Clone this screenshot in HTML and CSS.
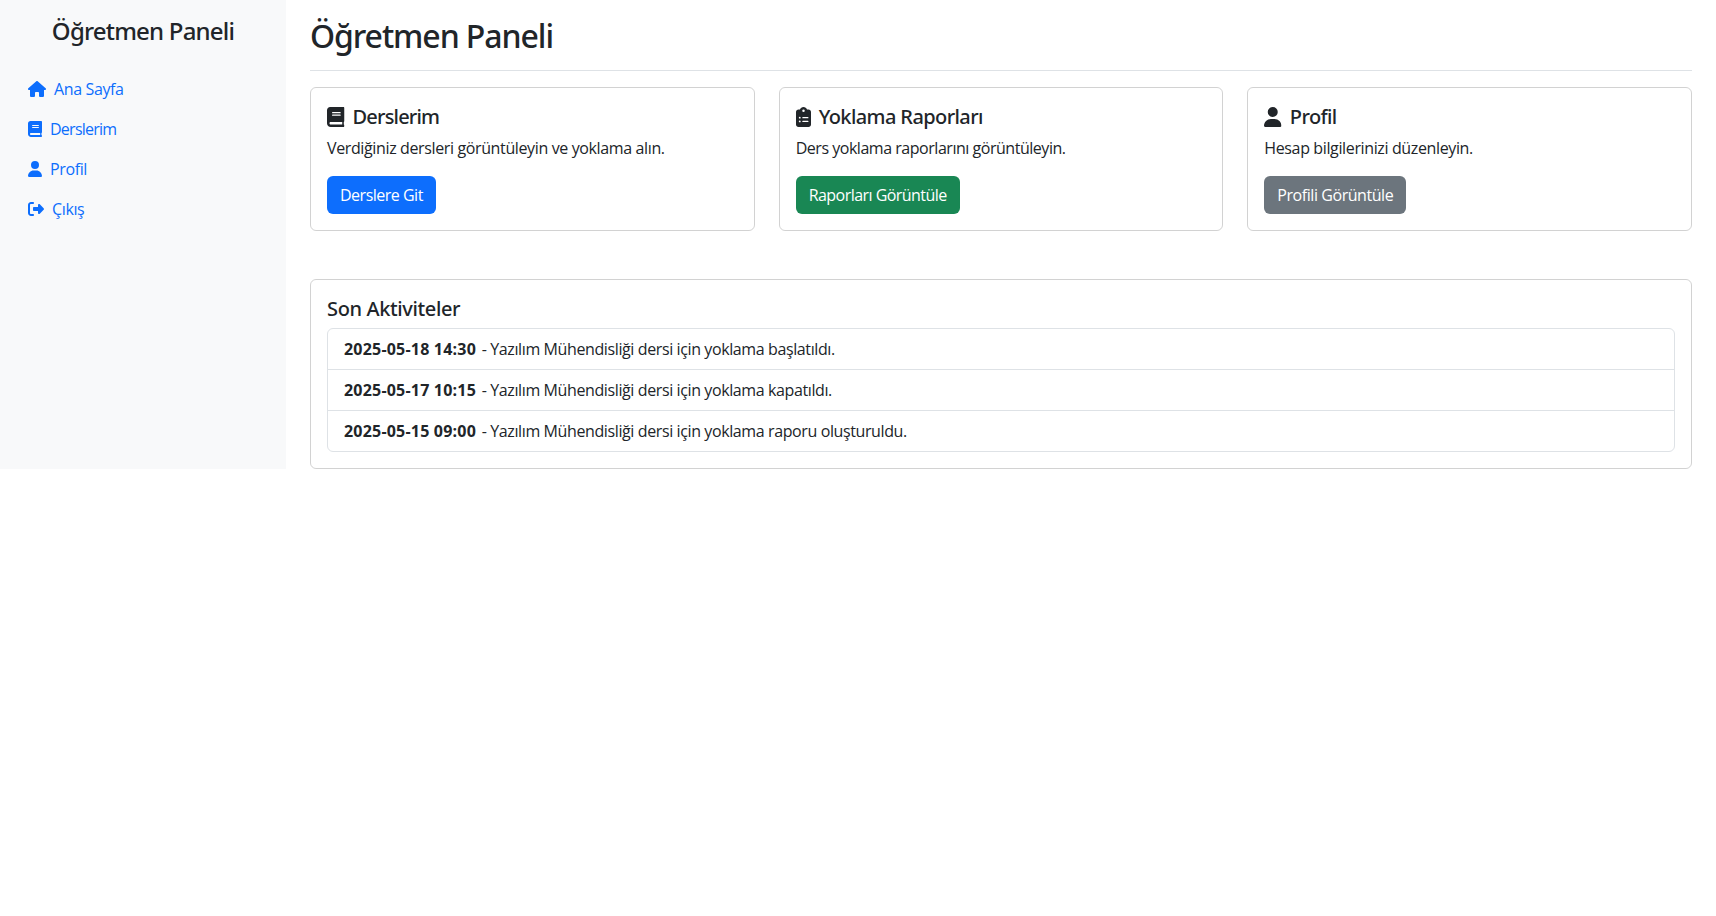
FILE: index.html
```html
<!DOCTYPE html>
<html lang="tr">
<head>
<meta charset="utf-8">
<title>Öğretmen Paneli</title>
<link rel="stylesheet" href="styles.css">
</head>
<body>
<svg class="sprite" aria-hidden="true">
  <symbol id="house" viewBox="0 0 576 512"><path d="M575.8 255.500c0 18-15 32.100-32 32.100h-32l.7 160.200c0 2.700-.2 5.400-.5 8.100V472c0 22.100-17.900 40-40 40H456c-1.100 0-2.200 0-3.300-.1c-1.400 .1-2.800 .1-4.200 .1H416 392c-22.100 0-40-17.900-40-40V448 384c0-17.700-14.300-32-32-32H256c-17.700 0-32 14.300-32 32v64 24c0 22.100-17.900 40-40 40H160 128.100c-1.500 0-3-.1-4.500-.2c-1.200 .1-2.400 .2-3.600 .2H104c-22.100 0-40-17.900-40-40V360c0-.9 0-1.900 .1-2.800V287.600H32c-18 0-32-14-32-32.100c0-9 3-17 10-24L266.400 8c7-7 15-8 22-8s15 2 21 7L564.800 231.500c8 7 12 15 11 24z"/></symbol>
  <symbol id="book" viewBox="0 0 448 512"><path d="M80 0C36 0 0 36 0 80V416c0 53 43 96 96 96H384h32c17.700 0 32-14.300 32-32s-8-30-18-32V384c12-2 18-14.300 18-32V32c0-17.700-14.300-32-32-32H384 80zm16 384H390v64H96c-17.700 0-32-14.300-32-32s14.300-32 32-32zm32-240c0-8.800 7.200-16 16-16H336c8.800 0 16 7.200 16 16s-7.200 16-16 16H144c-8.800 0-16-7.200-16-16zm16 48H336c8.800 0 16 7.200 16 16s-7.200 16-16 16H144c-8.800 0-16-7.200-16-16s7.200-16 16-16z"/></symbol>
  <symbol id="user" viewBox="0 0 448 512"><path d="M224 256A128 128 0 1 0 224 0a128 128 0 1 0 0 256zm-45.700 48C79.800 304 0 383.800 0 482.300C0 498.700 13.300 512 29.700 512H418.300c16.400 0 29.700-13.300 29.700-29.700C448 383.800 368.200 304 269.700 304H178.300z"/></symbol>
  <symbol id="exit" viewBox="0 0 512 512"><path d="M377.900 105.900L500.700 228.700c7.200 7.200 11.300 17.100 11.300 27.300s-4.100 20.100-11.300 27.300L377.900 406.100c-6.400 6.400-15 9.900-24 9.900c-18.700 0-33.900-15.200-33.900-33.900l0-62.100-128 0c-17.700 0-32-14.300-32-32l0-64c0-17.700 14.300-32 32-32l128 0 0-62.100c0-18.700 15.200-33.900 33.900-33.900c9 0 17.600 3.600 24 9.900zM160 96L96 96c-17.700 0-32 14.300-32 32l0 256c0 17.700 14.300 32 32 32l64 0c17.700 0 32 14.300 32 32s-14.300 32-32 32l-64 0c-53 0-96-43-96-96L0 128C0 75 43 32 96 32l64 0c17.700 0 32 14.300 32 32s-14.300 32-32 32z"/></symbol>
  <symbol id="clipboard" viewBox="0 0 384 512"><path d="M192 0c-41.800 0-77.400 26.700-90.500 64H64C28.700 64 0 92.700 0 128V448c0 35.300 28.700 64 64 64H320c35.300 0 64-28.700 64-64V128c0-35.300-28.700-64-64-64H282.500C269.400 26.700 233.800 0 192 0zm0 64a32 32 0 1 1 0 64 32 32 0 1 1 0-64zM72 272a24 24 0 1 1 48 0 24 24 0 1 1-48 0zm104-16H304c8.800 0 16 7.200 16 16s-7.200 16-16 16H176c-8.800 0-16-7.200-16-16s7.200-16 16-16zM72 368a24 24 0 1 1 48 0 24 24 0 1 1-48 0zm88 0c0-8.800 7.200-16 16-16H304c8.800 0 16 7.200 16 16s-7.200 16-16 16H176c-8.800 0-16-7.200-16-16z"/></symbol>
</svg>
<div class="layout">
  <nav class="sidebar">
    <h4 class="brand">Öğretmen Paneli</h4>
    <ul class="nav">
      <li><a class="nav-link" href="#"><svg class="icon w-576"><use href="#house"/></svg><span>Ana Sayfa</span></a></li>
      <li><a class="nav-link" href="#"><svg class="icon w-448"><use href="#book"/></svg><span class="tight">Derslerim</span></a></li>
      <li><a class="nav-link" href="#"><svg class="icon w-448"><use href="#user"/></svg><span>Profil</span></a></li>
      <li><a class="nav-link" href="#"><svg class="icon w-512"><use href="#exit"/></svg><span>Çıkış</span></a></li>
    </ul>
  </nav>
  <main class="main">
    <div class="page-head"><h1 class="page-title">Öğretmen Paneli</h1></div>
    <div class="cards">
      <section class="card">
        <h5 class="card-title"><svg class="icon w-448"><use href="#book"/></svg><span class="tight">Derslerim</span></h5>
        <p class="card-text">Verdiğiniz dersleri görüntüleyin ve yoklama alın.</p>
        <a class="btn btn-primary" href="#">Derslere Git</a>
      </section>
      <section class="card">
        <h5 class="card-title"><svg class="icon w-384"><use href="#clipboard"/></svg><span>Yoklama Raporları</span></h5>
        <p class="card-text reports-text">Ders yoklama raporlarını görüntüleyin.</p>
        <a class="btn btn-success" href="#">Raporları Görüntüle</a>
      </section>
      <section class="card">
        <h5 class="card-title"><svg class="icon w-448"><use href="#user"/></svg><span>Profil</span></h5>
        <p class="card-text">Hesap bilgilerinizi düzenleyin.</p>
        <a class="btn btn-secondary" href="#">Profili Görüntüle</a>
      </section>
    </div>
    <section class="card activity">
      <h5 class="card-title">Son Aktiviteler</h5>
      <ul class="list">
        <li><strong>2025-05-18 14:30</strong> <span>- Yazılım Mühendisliği dersi için yoklama başlatıldı.</span></li>
        <li><strong>2025-05-17 10:15</strong> <span>- Yazılım Mühendisliği dersi için yoklama kapatıldı.</span></li>
        <li><strong>2025-05-15 09:00</strong> <span>- Yazılım Mühendisliği dersi için yoklama raporu oluşturuldu.</span></li>
      </ul>
    </section>
  </main>
</div>
</body>
</html>
```
FILE: styles.css
```css
* { box-sizing: border-box; }
body {
  margin: 0;
  background: #fff;
  color: #212529;
  font: 400 16px/24px "Segoe UI", "Open Sans", "Noto Sans", sans-serif;
  letter-spacing: -0.37px;
}
h1, h4, h5, p, ul { margin: 0; padding: 0; }
ul { list-style: none; }
a { text-decoration: none; }
.sprite { display: none; }
.layout { display: flex; align-items: stretch; }
.sidebar { flex: 0 0 286px; padding-top: 17px; background: #f8f9fa; }
.brand { margin-bottom: 23px; text-align: center; font-family: "Segoe UI", "Noto Sans", sans-serif; font-size: 24px; font-weight: 500; line-height: 1.2; letter-spacing: -0.8px; }
.nav { padding: 0 12px; }
.nav-link { display: block; padding: 8px 16px; color: #0d6efd; }
.tight { letter-spacing: -0.75px; }
.icon { height: 1em; margin-right: 8px; vertical-align: -0.125em; fill: currentColor; }
.w-576 { width: 1.125em; }
.w-512 { width: 1em; }
.w-448 { width: 0.875em; }
.w-384 { width: 0.75em; }
.main { flex: 1; min-width: 0; padding: 0 24px; }
.page-head { margin-bottom: 16px; padding: 17px 0 15px; border-bottom: 1px solid #dee2e6; }
.page-title { font-family: "Segoe UI", "Noto Sans", sans-serif; font-size: 32px; font-weight: 500; line-height: 1.2; letter-spacing: -1.07px; }
.cards { display: grid; grid-template-columns: repeat(3, 1fr); gap: 24px; }
.card { padding: 16px; border: 1px solid rgba(0, 0, 0, 0.176); border-radius: 6px; }
.card-title { padding-top: 1px; margin-bottom: 7px; font-family: "Segoe UI", "Noto Sans", sans-serif; font-size: 20px; font-weight: 500; line-height: 24px; letter-spacing: -0.6px; }
.card-title .tight { letter-spacing: -0.8px; }
.card-text { margin-bottom: 16px; }
.reports-text { letter-spacing: -0.47px; }
.btn { display: inline-block; padding: 6px 12px; border: 1px solid transparent; border-radius: 6px; color: #fff; vertical-align: middle; letter-spacing: -0.5px; }
.btn-primary { background: #0d6efd; }
.btn-success { background: #198754; letter-spacing: -0.54px; }
.btn-secondary { background: #6c757d; letter-spacing: -0.44px; }
.activity { margin-top: 48px; }
.activity .card-title { letter-spacing: -0.37px; }
.list { border: 1px solid #dee2e6; border-radius: 6px; letter-spacing: -0.39px; }
.list strong { margin-right: 2px; letter-spacing: 0.2px; }
.list li { padding: 8px 16px; }
.list li + li { border-top: 1px solid #dee2e6; }
```
